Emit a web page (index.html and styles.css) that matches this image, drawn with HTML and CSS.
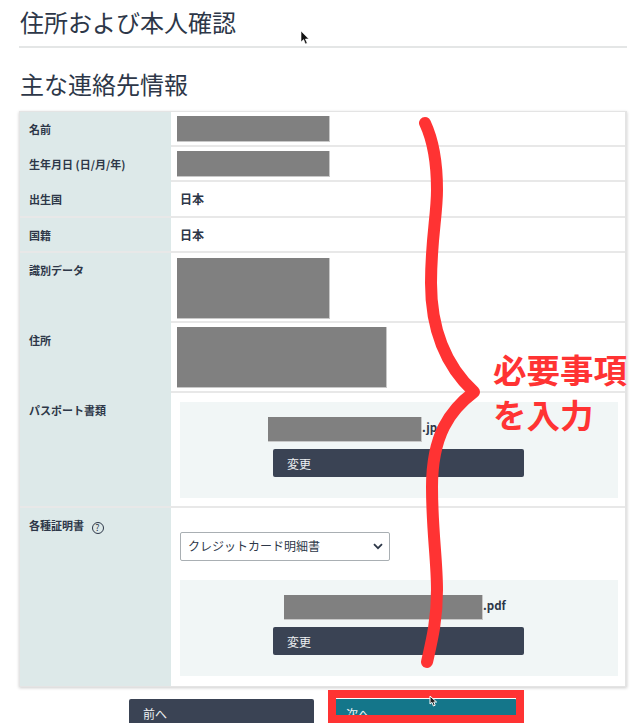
FILE: index.html
```html
<!DOCTYPE html>
<html lang="ja">
<head>
  <meta charset="UTF-8" />
  <meta name="viewport" content="width=device-width, initial-scale=1.0"/>
  <title>住所および本人確認</title>
  <link rel="stylesheet" href="styles.css">
</head>
<body>
  <div class="page">
    <h1>住所および本人確認</h1>
    <h2>主な連絡先情報</h2>

    <div class="info-table">
      <div class="row row-35">
        <div class="label">名前</div>
        <div class="value"><div class="mask mask-short"></div></div>
      </div>
      <div class="row row-35">
        <div class="label">生年月日 (日/月/年)</div>
        <div class="value"><div class="mask mask-short"></div></div>
      </div>
      <div class="row row-36">
        <div class="label">出生国</div>
        <div class="value plain">日本</div>
      </div>
      <div class="row row-35">
        <div class="label">国籍</div>
        <div class="value plain">日本</div>
      </div>
      <div class="row row-70">
        <div class="label">識別データ</div>
        <div class="value top-5"><div class="mask mask-tall"></div></div>
      </div>
      <div class="row row-70">
        <div class="label">住所</div>
        <div class="value"><div class="mask mask-tall mask-wide"></div></div>
      </div>
      <div class="row">
        <div class="label">パスポート書類</div>
        <div class="value top-9 bottom-8">
          <div class="upload">
            <div class="file-name file-passport"><div class="mask mask-file"></div>.jpg</div>
            <button class="dark-btn change-btn">変更</button>
          </div>
        </div>
      </div>
      <div class="row row-last">
        <div class="label">各種証明書 <span class="help">?</span></div>
        <div class="value top-24">
          <div class="select-wrap">
            <select class="doc-select">
              <option>クレジットカード明細書</option>
            </select>
            <svg class="chevron" width="10" height="7" viewBox="0 0 10 7"><path d="M1 1.2 5 5.2 9 1.2" fill="none" stroke="#2d3748" stroke-width="1.8"/></svg>
          </div>
          <div class="upload">
            <div class="file-name file-statement"><div class="mask mask-file-long"></div>.pdf</div>
            <button class="dark-btn change-btn">変更</button>
          </div>
        </div>
      </div>
    </div>

    <div class="nav-buttons">
      <button class="dark-btn nav-btn">前へ</button>
      <button class="teal-btn nav-btn">次へ</button>
    </div>
  </div>

  <!-- Annotations drawn over the screenshot -->
  <svg class="brace" width="640" height="723" viewBox="0 0 640 723">
    <path d="M425 123 C433 140 437 160 437 190 C437 215 431 240 431 283 C431 330 445 365 474 392 C450 410 432 435 432 487 C432 530 437 560 437 590 C437 620 432 640 427 662" fill="none" stroke="#ff3333" stroke-width="12" stroke-linecap="round" stroke-linejoin="round"/>
  </svg>
  <div class="note">必要事項<br>を入力</div>
  <div class="next-highlight"></div>

  <svg class="cursor cursor-top" width="10" height="16" viewBox="0 0 10 16"><path d="M1 1 1 12 3.6 9.6 5.4 14 7.2 13.2 5.4 9 8.8 9Z" fill="#111" stroke="#fff" stroke-width="0.6"/></svg>
  <svg class="cursor cursor-next" width="10" height="12" viewBox="0 0 10 12"><path d="M1 0 1 8 3 6.4 4.4 10 6.2 9.2 4.8 6 7.6 6Z" fill="#222" stroke="#fff" stroke-width="1"/></svg>
</body>
</html>
```

FILE: styles.css
```css
* {
  box-sizing: border-box;
}

body {
  margin: 0;
  height: 723px;
  overflow: hidden;
  position: relative;
  background: #fff;
  color: #2d3748;
  font-family: "Noto Sans CJK JP", "Noto Sans", sans-serif;
}

.page {
  padding: 0 13px 0 19px;
}

h1,
h2 {
  margin: 0;
  padding-left: 1px;
  font-size: 24px;
  font-weight: 400;
}

h1 {
  height: 48px;
  line-height: 44px;
  border-bottom: 2px solid #e4e6e6;
}

h2 {
  margin-top: 19px;
  margin-bottom: 11px;
  line-height: 33px;
}

/* Info table */
.info-table {
  border: 1px solid #e4e4e4;
  border-right-width: 2px;
  box-shadow: 0 1px 3px rgba(0, 0, 0, 0.2);
}

.row {
  display: grid;
  grid-template-columns: 151px 1fr;
  border-bottom: 2px solid #e8e8e8;
}

.row-35 { height: 35px; }
.row-36 { height: 36px; }
.row-70 { height: 70px; }

.row-last {
  border-bottom: none;
}

.label {
  background: #dde9e9;
  padding: 9px 0 0 9px;
  font-size: 11px;
  line-height: 16px;
  font-weight: 700;
}

.value {
  padding: 4px 7px 10px 6px;
  font-size: 12px;
}

.plain {
  padding: 8px 0 0 9px;
  line-height: 17px;
  font-weight: 700;
}

.top-5 { padding-top: 5px; }
.top-9 { padding-top: 9px; }
.top-24 { padding-top: 24px; }
.bottom-8 { padding-bottom: 8px; }

/* Grey boxes hiding personal data */
.mask {
  background: #808080;
  border: 1px solid #c8c8c8;
  border-width: 0 1px 1px 0;
  width: 153px;
  height: 26px;
}

.mask-tall {
  height: 61px;
}

.mask-wide {
  width: 210px;
}

.mask-file {
  width: 154px;
  height: 25px;
}

.mask-file-long {
  width: 199px;
  height: 25px;
}

/* File upload panels */
.upload {
  margin-left: 3px;
  height: 96px;
  padding: 15px 0 0 93px;
  background: #f1f6f6;
}

.file-name {
  display: flex;
  align-items: flex-start;
  height: 25px;
  margin-bottom: 7px;
  font-size: 11.5px;
  line-height: 21px;
  font-weight: 700;
}

.file-passport {
  margin-left: -5px;
}

.file-statement {
  margin-left: 11px;
}

.dark-btn,
.teal-btn {
  display: block;
  border: none;
  border-radius: 2px;
  color: #edf0f2;
  font-family: inherit;
  font-size: 12px;
  text-align: left;
  padding: 0 0 0 14px;
}

.dark-btn {
  background: #3a4354;
}

.teal-btn {
  background: #14768a;
}

.change-btn {
  width: 251px;
  height: 28px;
}

/* Select */
.select-wrap {
  position: relative;
  width: 210px;
  height: 29px;
  margin: 0 0 19px 3px;
}

.doc-select {
  appearance: none;
  width: 100%;
  height: 100%;
  padding: 0 0 2px 7px;
  border: 1px solid #a9afb3;
  border-radius: 2px;
  background: #fff;
  color: #2d3748;
  font-family: inherit;
  font-size: 12px;
}

.chevron {
  position: absolute;
  right: 7px;
  top: 11px;
}

.help {
  display: inline-block;
  width: 12px;
  height: 12px;
  margin-left: 5px;
  border: 1px solid #2d3748;
  border-radius: 50%;
  font-size: 9px;
  font-weight: 400;
  line-height: 10px;
  text-align: center;
  vertical-align: -1px;
}

/* Bottom navigation */
.nav-buttons {
  display: flex;
  justify-content: center;
  gap: 18px;
  margin-top: 12px;
}

.nav-btn {
  width: 185px;
  height: 40px;
  padding-bottom: 12px;
}

/* Annotations */
.brace {
  position: absolute;
  left: 0;
  top: 0;
}

.note {
  position: absolute;
  left: 493px;
  top: 346px;
  color: #ff3333;
  font-size: 33.5px;
  line-height: 45px;
  font-weight: 700;
  white-space: nowrap;
}

.next-highlight {
  position: absolute;
  left: 328px;
  top: 690px;
  width: 196px;
  height: 33px;
  border: 8px solid #ff3333;
}

.cursor {
  position: absolute;
}

.cursor-top {
  left: 300px;
  top: 30px;
}

.cursor-next {
  left: 429px;
  top: 696px;
}
```
